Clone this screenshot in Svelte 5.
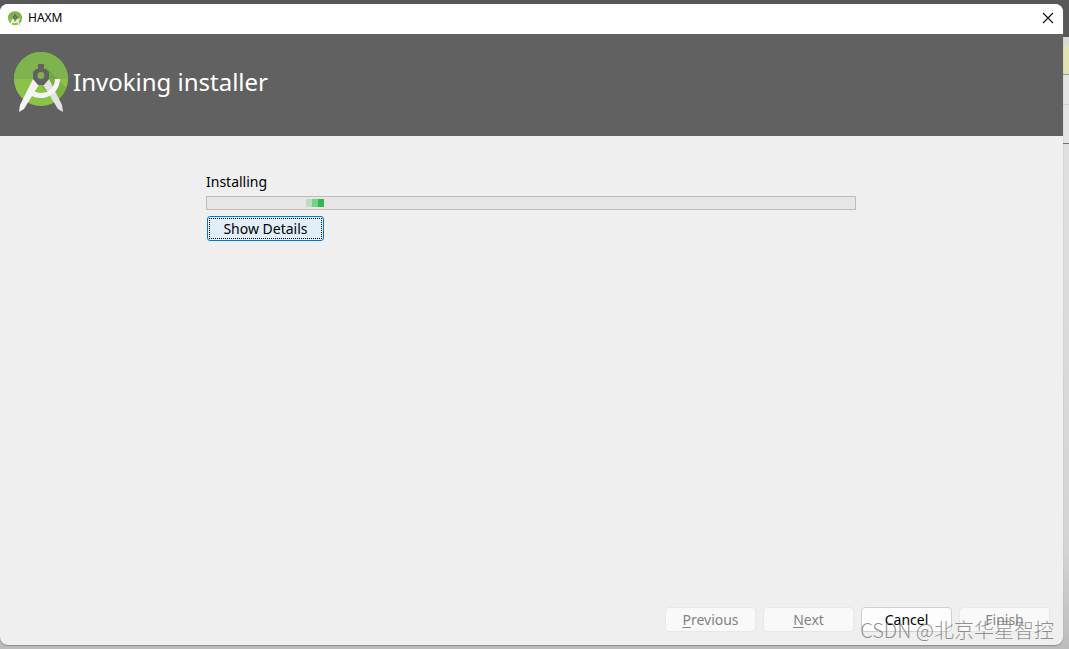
<script lang="ts">
  type WizardButton = { key: string; rest: string; disabled: boolean };

  const buttons: WizardButton[] = [
    { key: "P", rest: "revious", disabled: true },
    { key: "N", rest: "ext", disabled: true },
    { key: "", rest: "Cancel", disabled: false },
    { key: "", rest: "Finish", disabled: true },
  ];

  let showDetails = $state(false);
</script>

{#snippet logo()}
  <svg class="logo" viewBox="0 0 54 60" aria-hidden="true">
    <defs>
      <clipPath id="disc"><circle cx="27" cy="27" r="27" /></clipPath>
    </defs>
    <circle cx="27" cy="27" r="27" fill="#8bc34a" />
    <g clip-path="url(#disc)">
      <path d="M0 0H54V27H0Z" fill="#7fb34d" />
      <path d="M32 15L54 37V54H44L27 33Z" fill="#4f8a2e" opacity="0.3" />
    </g>
    <path d="M28 31L35 27L48 53L49 60L44 57Z" fill="#e2e2e2" />
    <path d="M46 27C46 38 37 46 27 46C23 46 19 45 16 43L18 38C21 40 24 41 27 41C35 41 41 35 41 27Z" fill="#f5f5f5" />
    <path d="M19 27L26 31L10 57L5 60L6 53Z" fill="#f5f5f5" />
    <path
      d="M24 12H30V17H32L35 20V27L30 33H24L19 27V20L22 17H24ZM27 20A3.500 3.500 0 1 0 27 27A3.500 3.500 0 1 0 27 20Z"
      fill="#616161"
      fill-rule="evenodd"
    />
  </svg>
{/snippet}

<div class="desktop">
  <div class="backdrop">
    <div class="toolbar"></div>
    <div class="tabs"></div>
    <div class="notice"></div>
    <div class="row"></div>
    <div class="pane"></div>
    <div class="rest"></div>
  </div>

  <div class="window">
    <div class="titlebar">
      <span class="app-icon">{@render logo()}</span>
      <span class="caption">HAXM</span>
      <button class="close" aria-label="Close">
        <svg viewBox="0 0 12 12"><path d="M1 1L11 11M11 1L1 11" /></svg>
      </button>
    </div>

    <header class="banner">
      {@render logo()}
      <h1>Invoking installer</h1>
    </header>

    <main class="content">
      <label for="progress">Installing</label>
      <progress id="progress"></progress>
      <button class="details" onclick={() => (showDetails = !showDetails)}>Show Details</button>
    </main>

    <footer class="actions">
      {#each buttons as b}
        <button disabled={b.disabled}>{#if b.key}<u>{b.key}</u>{/if}{b.rest}</button>
      {/each}
    </footer>
  </div>

  <div class="watermark">CSDN @北京华星智控</div>
</div>

<style>
  :global(body) {
    margin: 0;
  }
  .desktop {
    display: grid;
    position: relative;
    min-height: 100vh;
    font-family: "Noto Sans", "Open Sans", sans-serif;
    font-size: 14px;
    color: #000;
  }
  .backdrop,
  .window {
    grid-area: 1 / 1;
    display: flex;
    flex-direction: column;
  }
  .backdrop {
    background: #e4e4e4;
  }
  .toolbar {
    height: 37px;
    background: #585858;
  }
  .tabs {
    height: 8px;
    background: #d8d8d8;
  }
  .notice {
    height: 29px;
    background: #e3e1b0;
    border-bottom: 1px solid #9a9a9a;
  }
  .row {
    height: 29px;
    background: #e4e4e4;
    border-bottom: 1px solid #cfcfcf;
  }
  .pane {
    height: 38px;
    border-bottom: 1px solid #6e6e6e;
  }
  .rest {
    flex: 1;
    background: linear-gradient(#e0e0e0 0, #d4d4d4 80%, #bcbcbc 100%);
  }
  .window {
    margin: 4px 6px 4px 0;
    background: #efefef;
    border-radius: 8px;
    overflow: hidden;
    box-shadow: 0 1px 1px #8c8c8c;
  }
  .titlebar {
    display: flex;
    align-items: center;
    height: 30px;
    padding: 0 8px;
    background: #fff;
    font-size: 12px;
    line-height: 16px;
  }
  .app-icon {
    display: flex;
    width: 14px;
    height: 16px;
  }
  .caption {
    flex: 1;
    margin-left: 6px;
    padding-bottom: 2px;
  }
  .close {
    display: flex;
    padding: 0 0 2px;
    border: none;
    background: transparent;
  }
  .close svg {
    width: 14px;
    height: 12px;
    fill: none;
    stroke: #111;
    stroke-width: 1.200;
  }
  .logo {
    display: block;
    width: 100%;
    height: 100%;
  }
  .banner {
    display: flex;
    align-items: center;
    height: 102px;
    padding: 0 14px;
    gap: 5px;
    background: #616161;
    color: #fff;
    box-sizing: border-box;
  }
  .banner .logo {
    flex: none;
    width: 54px;
    height: 60px;
    margin-bottom: 6px;
  }
  h1 {
    margin: 0 0 6px;
    font-size: 24px;
    font-weight: 400;
    line-height: 32px;
  }
  .content {
    display: flex;
    flex: 1;
    flex-direction: column;
    align-items: flex-start;
    gap: 4px;
    padding: 36px 207px 0 206px;
  }
  label {
    line-height: 20px;
  }
  progress {
    display: block;
    width: 100%;
    height: 14px;
    border: 1px solid #bcbcbc;
    box-sizing: border-box;
    appearance: none;
    background: #e6e6e6;
  }
  progress::-webkit-progress-bar {
    background: linear-gradient(
      90deg,
      #b9dfc3 0 6px,
      #75cf8d 6px 12px,
      #30b94e 12px 18px
    ) 99px 2px / 18px 8px no-repeat #e6e6e6;
  }
  button {
    font: inherit;
    color: inherit;
  }
  .details {
    width: 117px;
    height: 25px;
    margin: 2px 0 0 1px;
    padding: 0;
    border: 1px solid #0078d4;
    border-radius: 3px;
    background: #e0eef9;
    outline: 1px dotted #000;
    outline-offset: -3px;
  }
  .actions {
    display: flex;
    justify-content: flex-end;
    gap: 7px;
    padding: 0 13px 13px;
  }
  .actions button {
    width: 91px;
    height: 25px;
    padding: 0;
    border: 1px solid #d0d0d0;
    border-radius: 4px;
    background: #fdfdfd;
  }
  .actions button:disabled {
    border-color: #e8e8e8;
    background: #f9f9f9;
    color: #838383;
  }
  u {
    text-underline-offset: 2px;
  }
  .watermark {
    position: absolute;
    right: 15px;
    bottom: 5px;
    font-family: "Noto Sans CJK SC", sans-serif;
    font-size: 20px;
    font-weight: 300;
    line-height: 28px;
    color: rgba(110, 110, 110, 0.75);
    pointer-events: none;
  }
</style>
